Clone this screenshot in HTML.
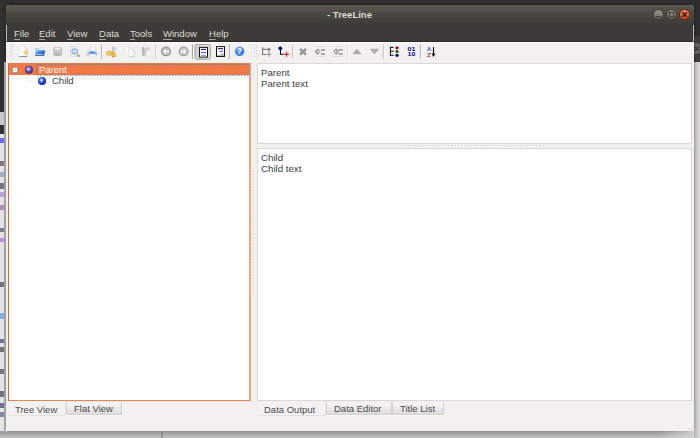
<!DOCTYPE html>
<html><head><meta charset="utf-8">
<style>
html,body{margin:0;padding:0}
body{width:700px;height:438px;position:relative;overflow:hidden;background:#d6d6d6;font-family:"Liberation Sans",sans-serif;font-size:9.5px;color:#3c3c3c}
div,span,svg{position:absolute;box-sizing:border-box}
.bgdark{background:#303030}
#win{left:6px;top:5px;width:688px;height:426px;background:#f2f1f0;border-radius:4px 4px 0 0;box-shadow:0 -1px 3px 0 rgba(0,0,0,.35)}
#title{left:0;top:0;width:688px;height:20px;border-radius:4px 4px 0 0;background:linear-gradient(#5d5a51,#4a4842 45%,#3c3b37)}
#title .t{left:0;width:688px;top:4px;text-align:center;font-weight:bold;color:#dfdbd2;font-size:9.5px;line-height:11px;padding-right:1px}
#menubar{left:0;top:20px;width:688px;height:17px;background:#3c3b37;border-left:1px solid #b9b8b4;border-right:1px solid #b9b8b4;border-bottom:1px solid #2a2926}
.mi{top:3px;color:#dfdbd2;font-size:9.5px;line-height:11px;white-space:nowrap}
.mi u{text-decoration:none;border-bottom:1px solid rgba(223,219,210,.65)}
#toolbar{left:0;top:37px;width:688px;height:21px;background:#f2f1f0;border-top:1px solid #fff}
.sep{top:2px;width:2px;height:15px;border-left:1px solid #b5b4b1;border-right:1px solid #fbfbfa}
.wb{top:4px;width:11px;height:11px;border-radius:50%}
.pane{background:#fff;border:1px solid #d9d8d5}
.tab{font-size:9.5px;line-height:11px;white-space:nowrap;color:#4a4a4a}
.tabu{top:397px;height:13px;background:linear-gradient(#f7f6f5,#dedddb);border:1px solid #d3d2cf;border-top-color:#f0efee;box-shadow:0 1px 0 #fbfbfa}
.tabs{top:396px;height:15px;background:#f3f2f1;border:1px solid #e3e2e0;border-top:none;border-left-color:#eeedec}
.tab span{white-space:nowrap}
</style></head><body>
<!-- background -->
<div class="bgdark" style="left:0;top:0;width:700px;height:62px"></div>
<div class="bgdark" style="left:0;top:0;width:8px;height:134px"></div>
<div style="left:0;top:112px;width:5px;height:13px;background:#c9c9c9"></div>
<div style="left:0;top:134px;width:6px;height:304px;background:#e4e4e4"></div>
<div style="left:0;top:138px;width:4px;height:5px;background:#1a1af0;opacity:.6"></div><div style="left:0;top:161px;width:4px;height:5px;background:#3a3030;opacity:.6"></div><div style="left:0;top:172px;width:4px;height:5px;background:#7890b8;opacity:.6"></div><div style="left:0;top:183px;width:4px;height:6px;background:#2a2a50;opacity:.6"></div><div style="left:0;top:192px;width:4px;height:5px;background:#9a7ac8;opacity:.6"></div><div style="left:0;top:205px;width:4px;height:5px;background:#8a5a9a;opacity:.6"></div><div style="left:0;top:228px;width:4px;height:4px;background:#30384a;opacity:.6"></div><div style="left:0;top:238px;width:4px;height:4px;background:#a050d0;opacity:.6"></div><div style="left:0;top:282px;width:4px;height:5px;background:#2a2a40;opacity:.6"></div><div style="left:0;top:313px;width:4px;height:6px;background:#4a90e0;opacity:.6"></div><div style="left:0;top:339px;width:4px;height:4px;background:#1a2a70;opacity:.6"></div><div style="left:0;top:347px;width:4px;height:5px;background:#2a2a3a;opacity:.6"></div><div style="left:0;top:369px;width:4px;height:5px;background:#2a2a4a;opacity:.6"></div><div style="left:0;top:391px;width:4px;height:6px;background:#1a2a50;opacity:.6"></div><div style="left:0;top:403px;width:4px;height:5px;background:#1a2a50;opacity:.6"></div><div style="left:0;top:412px;width:4px;height:5px;background:#3a4a80;opacity:.6"></div><div style="left:0;top:433px;width:4px;height:5px;background:#4a80e0;opacity:.6"></div>
<div style="left:0;top:431px;width:700px;height:7px;background:linear-gradient(#949494,#9c9c9c 15%,#c3c3c3)"></div><div style="left:161px;top:432px;width:2px;height:6px;background:#8a8a8a;opacity:.8"></div><div style="left:660px;top:431px;width:40px;height:7px;background:linear-gradient(90deg,rgba(220,220,218,0),rgba(220,220,218,.9))"></div>
<div style="left:694px;top:62px;width:6px;height:376px;background:linear-gradient(90deg,#b8b8b7,#dcdcda)"></div>
<div style="left:4px;top:62px;width:3px;height:370px;background:linear-gradient(90deg,#b6b6b6,#a6a6a6 35%,#dcdcdc)"></div>
<div style="left:694px;top:0;width:6px;height:36px;background:#2d2d2d"></div><div style="left:694px;top:36px;width:6px;height:26px;background:#3c3b37"></div><div style="left:691px;top:43px;width:11px;height:11px;border-radius:50%;background:#66655f"></div>
<svg style="left:691px;top:43px" width="11" height="11"><path d="M3.4 3.4l4.4 4.4M7.8 3.4l-4.4 4.4" stroke="#3a3935" stroke-width="1.4"/></svg>
<div id="win">
 <div id="title"><div class="t">- TreeLine</div>
  <div class="wb" style="left:647px;background:linear-gradient(#98968d,#6a6861);border:1px solid #3a3935"></div>
  <div class="wb" style="left:660px;background:linear-gradient(#98968d,#6a6861);border:1px solid #3a3935"></div>
  <div class="wb" style="left:673px;background:linear-gradient(#f68a5e,#df4a18);border:1px solid #6a2a10"></div>
 </div>
 <div id="menubar">
  <div class="mi" style="left:7px"><u>F</u>ile</div>
  <div class="mi" style="left:32px"><u>E</u>dit</div>
  <div class="mi" style="left:60px"><u>V</u>iew</div>
  <div class="mi" style="left:92px"><u>D</u>ata</div>
  <div class="mi" style="left:123px"><u>T</u>ools</div>
  <div class="mi" style="left:156px"><u>W</u>indow</div>
  <div class="mi" style="left:202px"><u>H</u>elp</div>
 </div>
 <div id="toolbar"></div>
 <!-- tree -->
 <div id="tree" style="left:2px;top:58px;width:243px;height:338px;background:#fff;border:1px solid #d9673a;border-right:2px solid #f2a480;border-bottom-color:#e9855c;border-top-color:#e57c52;box-shadow:0 1px 0 #e6e7e6">
  <div style="left:0;top:0;width:240px;height:11px;background:#f07746"></div>
  <div style="left:30px;top:0px;color:#fff;line-height:11px">Parent</div>
  <div style="left:43px;top:11px;line-height:11px">Child</div>
 </div>
 <!-- right panes -->
 <div class="pane" style="left:251px;top:58px;width:435px;height:81px"><div style="left:3px;top:3px;line-height:11px;font-size:9.7px">Parent<br>Parent text</div></div>
 <div class="pane" style="left:251px;top:143px;width:435px;height:253px"><div style="left:3px;top:3px;line-height:11px;font-size:9.7px">Child<br>Child text</div></div>
 <!-- tabs -->
 <div class="tab tabs" style="left:2px;width:58px"><span style="left:6px;top:3px">Tree View</span></div>
 <div class="tab tabu" style="left:60px;width:56px"><span style="left:7px;top:0px">Flat View</span></div>
 <div class="tab tabs" style="left:251px;width:69px"><span style="left:6px;top:3px">Data Output</span></div>
 <div class="tab tabu" style="left:320px;width:66px"><span style="left:7px;top:0px">Data Editor</span></div>
 <div class="tab tabu" style="left:386px;width:52px"><span style="left:7px;top:0px">Title List</span></div>
</div>

<svg id="ov" style="left:0;top:0" width="700" height="438" viewBox="0 0 700 438">
<defs>
<radialGradient id="gp" cx="0.44" cy="0.42" r="0.6"><stop offset="0" stop-color="#efe4f4"/><stop offset="0.18" stop-color="#c4b6e0"/><stop offset="0.5" stop-color="#6558b4"/><stop offset="1" stop-color="#2c2180"/></radialGradient>
<radialGradient id="gc" cx="0.42" cy="0.4" r="0.62"><stop offset="0" stop-color="#f4faff"/><stop offset="0.18" stop-color="#a8c8ff"/><stop offset="0.5" stop-color="#2c54e0"/><stop offset="1" stop-color="#081494"/></radialGradient>
<radialGradient id="gh" cx="0.4" cy="0.35" r="0.7"><stop offset="0" stop-color="#70a8ff"/><stop offset="1" stop-color="#2f6cf0"/></radialGradient>
<linearGradient id="gf" x1="0" y1="0" x2="1" y2="1"><stop offset="0" stop-color="#7ab8f4"/><stop offset="0.5" stop-color="#2c62dc"/><stop offset="1" stop-color="#1a44c0"/></linearGradient>
</defs>
<rect x="10.1" y="43.7" width="1.2" height="1.2" fill="#cbcac6"/><rect x="11.2" y="44.8" width="1" height="1" fill="#fbfbfa"/><rect x="12.0" y="45.7" width="1.2" height="1.2" fill="#cbcac6"/><rect x="13.1" y="46.8" width="1" height="1" fill="#fbfbfa"/><rect x="10.1" y="47.8" width="1.2" height="1.2" fill="#cbcac6"/><rect x="11.2" y="48.9" width="1" height="1" fill="#fbfbfa"/><rect x="12.0" y="49.8" width="1.2" height="1.2" fill="#cbcac6"/><rect x="13.1" y="50.9" width="1" height="1" fill="#fbfbfa"/><rect x="10.1" y="51.8" width="1.2" height="1.2" fill="#cbcac6"/><rect x="11.2" y="52.9" width="1" height="1" fill="#fbfbfa"/><rect x="12.0" y="53.8" width="1.2" height="1.2" fill="#cbcac6"/><rect x="13.1" y="54.9" width="1" height="1" fill="#fbfbfa"/><rect x="10.1" y="55.8" width="1.2" height="1.2" fill="#cbcac6"/><rect x="11.2" y="56.9" width="1" height="1" fill="#fbfbfa"/><rect x="12.0" y="57.7" width="1.2" height="1.2" fill="#cbcac6"/><rect x="13.1" y="58.8" width="1" height="1" fill="#fbfbfa"/>
<!-- new -->
<path d="M19.3 46.5h5l2.7 2.7v7.3h-7.7z" fill="#fdfdff" stroke="#dfe0ef" stroke-width=".5"/>
<path d="M23.6 46.5h.9l2.7 2.7v1.6z" fill="#cfd0f2"/>
<rect x="19" y="56" width="8.2" height="1" fill="#8a97ad"/><path d="M27 49.4v6.6" stroke="#b4bbd0" stroke-width=".6"/>
<path d="M25.5 50l.9 1.5 1.5.9-1.5.9-.9 1.5-.9-1.5-1.5-.9 1.5-.9z" fill="#f7c534" stroke="#f0ac30" stroke-width=".4"/>
<circle cx="25.5" cy="52.4" r=".8" fill="#fdf08a"/>
<!-- open -->
<path d="M35.2 48.2h3l.8 .9h3.2v6.9h-7z" fill="#8cc2f5"/><path d="M35.8 48.8h2.2l.8 .9h-3z" fill="#d8ecff"/>
<path d="M37.6 50.4l3.4-3 1.8 1.3 1.2 1.7z" fill="#fff" stroke="#9fb0de" stroke-width=".4"/>
<path d="M37.4 50.6h8l-1.6 5.5h-8.4z" fill="url(#gf)"/>
<rect x="36.6" y="54.2" width="6.4" height=".9" fill="#e8f0ff"/>
<rect x="38" y="51.8" width="4.5" height=".7" fill="#6aa0f0"/>
<!-- save disabled -->
<rect x="53.2" y="47.2" width="8.8" height="8.6" rx="1" fill="#bfbfbf"/>
<rect x="54.6" y="47.8" width="5.8" height="2.4" fill="#ececec"/>
<rect x="53.8" y="51.2" width="7.6" height="1.6" fill="#c9c9c9"/>
<rect x="55" y="53.4" width="5" height="2.4" fill="#b4b4b4"/>
<!-- print preview -->
<path d="M70.5 46.5h4.6l2.6 2.6v7.2h-7.2z" fill="#eef1fa" stroke="#c6cde4" stroke-width=".6"/>
<circle cx="74.6" cy="51.4" r="2.7" fill="#bcd6f8" stroke="#86a8e0" stroke-width="1"/>
<rect x="72.8" y="50.9" width="3.6" height="1" fill="#e6f0ff"/>
<path d="M77.6 54.6l1.5 1.5" stroke="#a8862c" stroke-width="1.5" stroke-linecap="round"/>
<path d="M77.6 54.6l1.5 1.5" stroke="#ecb836" stroke-width=".9" stroke-linecap="round"/>
<!-- printer -->
<rect x="90.4" y="46.5" width="4.8" height="5" fill="#fcfcff" stroke="#d4d8ea" stroke-width=".5"/>
<rect x="87.2" y="50.2" width="10" height="5" rx="1.2" fill="#d6dae6"/>
<rect x="87.2" y="53.6" width="10" height="1.6" rx=".6" fill="#9aa0b4"/>
<rect x="89.5" y="51.7" width="5.8" height="1.5" rx=".5" fill="#1e80f2"/>
<rect x="89" y="54.2" width="6.6" height="2.4" fill="#fbfbff" stroke="#cfd3e4" stroke-width=".4"/>
<rect x="101.0" y="44.5" width="1" height="14.4" fill="#b3b2af"/><rect x="102.0" y="44.5" width="1" height="14.4" fill="#fafaf9"/>
<!-- scissors -->
<path d="M111.7 51.9l1.3-5.6.9 .4-.6 5.4z" fill="#d4d7e8" stroke="#858bb2" stroke-width=".35"/>
<path d="M112.9 52.2l2.7-4.9.8 .7-2.3 4.7z" fill="#eeeff6" stroke="#9aa0c0" stroke-width=".35"/>
<ellipse cx="109" cy="53.3" rx="1.9" ry="1.6" fill="none" stroke="#eeaa10" stroke-width="1.4"/>
<ellipse cx="113.5" cy="54.9" rx="1.5" ry="1.9" fill="none" stroke="#e89a08" stroke-width="1.4"/>
<path d="M110.3 52.3l2.6 .7" stroke="#f2b416" stroke-width="1.5"/>
<!-- copy disabled -->
<path d="M124.4 46.5h3.4l1.8 1.8v5.5h-5.2z" fill="#f8f8fb" stroke="#dedfe8" stroke-width=".5"/><path d="M127.8 46.5l1.8 1.8v5.5" fill="none" stroke="#c8c9d6" stroke-width=".7"/>
<path d="M128.5 49h3.6l2 2v5.6h-5.6z" fill="#f6f6fa" stroke="#dcdde6" stroke-width=".5"/><path d="M132.1 49l2 2v5.6h-5.6" fill="none" stroke="#c6c7d4" stroke-width=".7"/>
<!-- paste disabled -->
<rect x="142" y="47" width="8" height="8.8" rx="1" fill="#d0d0d0"/>
<rect x="142" y="47" width="2.4" height="8.8" rx="1" fill="#bababa"/>
<ellipse cx="146" cy="47.2" rx="2" ry="1" fill="#f4f4f4" stroke="#c8c8c8" stroke-width=".4"/>
<path d="M146.2 50.2h3.8l2 2v4.6h-5.8z" fill="#f3f3f3" stroke="#d4d4d4" stroke-width=".4"/>
<rect x="155.0" y="44.5" width="1" height="14.4" fill="#d0cfcc"/><rect x="156.0" y="44.5" width="1" height="14.4" fill="#fafaf9"/>
<!-- back / fwd -->
<circle cx="166" cy="51.4" r="4.4" fill="#c2c2c2" stroke="#8c8c8c" stroke-width="1.1"/>
<path d="M162.8 51.4l3.2-3v2h3.3v2h-3.3v2z" fill="#fff" stroke="#a8a8a8" stroke-width=".35"/>
<circle cx="183.6" cy="51.4" r="4.4" fill="#cacaca" stroke="#999" stroke-width="1.1"/>
<path d="M186.8 51.4l-3.2-3v2h-3.3v2h3.3v2z" fill="#fff" stroke="#b0b0b0" stroke-width=".35"/>
<rect x="192.0" y="44.5" width="1" height="14.4" fill="#a9a8a5"/><rect x="193.0" y="44.5" width="1" height="14.4" fill="#fafaf9"/>
<!-- checked btn -->
<linearGradient id="gb" x1="0" x2="1"><stop offset="0" stop-color="#cccbc8"/><stop offset=".35" stop-color="#dddcd9"/><stop offset="1" stop-color="#e2e1de"/></linearGradient><rect x="195" y="44.5" width="15.4" height="14.8" rx="1.6" fill="url(#gb)" stroke="#a3a29e" stroke-width="1"/>
<rect x="199.5" y="47.4" width="8" height="9.7" fill="#fff" stroke="#111" stroke-width="1"/>
<rect x="201" y="48.9" width="5" height="1" fill="#000080"/>
<rect x="201" y="51.9" width="5" height="1" fill="#4a4aff"/>
<rect x="201" y="54.8" width="5" height="1" fill="#7c7cff"/>
<!-- second view btn -->
<rect x="216.5" y="46.6" width="8" height="9.6" fill="#fff" stroke="#111" stroke-width="1"/>
<rect x="216" y="56" width="9" height=".9" fill="#111"/>
<rect x="217.8" y="48.2" width="5.2" height="1" fill="#000080"/>
<rect x="219.6" y="50.9" width="3.4" height="1" fill="#4a4aff"/>
<rect x="221.4" y="53.8" width="1.8" height="1" fill="#5a5aff"/>
<rect x="228.9" y="44.5" width="1" height="14.4" fill="#a9a8a5"/><rect x="229.9" y="44.5" width="1" height="14.4" fill="#fafaf9"/>
<!-- help -->
<circle cx="239.6" cy="51.4" r="4.7" fill="url(#gh)"/>
<text x="239.6" y="54.4" font-family="Liberation Sans" font-weight="bold" font-size="8.2" fill="#fff" text-anchor="middle">?</text>
<rect x="254.0" y="43.7" width="1.2" height="1.2" fill="#cbcac6"/><rect x="255.1" y="44.8" width="1" height="1" fill="#fbfbfa"/><rect x="255.9" y="45.7" width="1.2" height="1.2" fill="#cbcac6"/><rect x="257.0" y="46.8" width="1" height="1" fill="#fbfbfa"/><rect x="254.0" y="47.8" width="1.2" height="1.2" fill="#cbcac6"/><rect x="255.1" y="48.9" width="1" height="1" fill="#fbfbfa"/><rect x="255.9" y="49.8" width="1.2" height="1.2" fill="#cbcac6"/><rect x="257.0" y="50.9" width="1" height="1" fill="#fbfbfa"/><rect x="254.0" y="51.8" width="1.2" height="1.2" fill="#cbcac6"/><rect x="255.1" y="52.9" width="1" height="1" fill="#fbfbfa"/><rect x="255.9" y="53.8" width="1.2" height="1.2" fill="#cbcac6"/><rect x="257.0" y="54.9" width="1" height="1" fill="#fbfbfa"/><rect x="254.0" y="55.8" width="1.2" height="1.2" fill="#cbcac6"/><rect x="255.1" y="56.9" width="1" height="1" fill="#fbfbfa"/><rect x="255.9" y="57.7" width="1.2" height="1.2" fill="#cbcac6"/><rect x="257.0" y="58.8" width="1" height="1" fill="#fbfbfa"/>
<!-- insert sibling -->
<path d="M262.6 47.1v7.8M262.1 49.3h5M262.1 54.4h4.6" stroke="#6e6e6e" stroke-width="1" fill="none"/>
<circle cx="269" cy="49.4" r="1.6" fill="#858585"/>
<path d="M266.9 54.3h4.2M269 51.7v5" stroke="#8a8a8a" stroke-width=".9"/>
<!-- add child -->
<circle cx="280.3" cy="48.3" r="1.9" fill="#00008c"/>
<path d="M280.5 50v4.3h3.2" stroke="#000" stroke-width="1.1" fill="none"/>
<path d="M284 54.3h5M286.5 51.8v5" stroke="#ff2222" stroke-width="1.2"/>
<rect x="292.0" y="44.5" width="1" height="14.4" fill="#c6c5c2"/><rect x="293.0" y="44.5" width="1" height="14.4" fill="#fafaf9"/>
<!-- delete -->
<path d="M300 48.8l6 5.8M306 48.8l-6 5.8" stroke="#939393" stroke-width="2.4"/>
<!-- indent -->
<rect x="315.3" y="46" width="9.8" height=".6" fill="#cfcfcf"/><rect x="315.3" y="56" width="9.8" height=".6" fill="#cfcfcf"/>
<path d="M315.7 50.4h1.9v-1.6l2.7 2.8-2.7 2.8v-1.6h-1.9z" fill="#dadada" stroke="#727272" stroke-width=".8"/>
<rect x="321" y="49" width="4.1" height="1.8" fill="#a4a4a4"/><rect x="321" y="53.2" width="4.1" height="1.8" fill="#a4a4a4"/>
<!-- unindent -->
<rect x="333" y="46" width="9.8" height=".6" fill="#cfcfcf"/><rect x="333" y="56" width="9.8" height=".6" fill="#cfcfcf"/>
<path d="M338 50.4h-1.7v-1.6l-2.9 2.8 2.9 2.8v-1.6h1.7z" fill="#dadada" stroke="#727272" stroke-width=".8"/>
<rect x="338.4" y="49" width="4.4" height="1.8" fill="#a4a4a4"/><rect x="338.4" y="53.2" width="4.4" height="1.8" fill="#a4a4a4"/>
<rect x="347.1" y="44.5" width="1" height="14.4" fill="#dfdfe2"/><rect x="348.1" y="44.5" width="1" height="14.4" fill="#fafaf9"/>
<!-- up/down -->
<path d="M356.9 49.3l3.9 4.5h-7.8z" fill="#acacac" stroke="#8a8a8a" stroke-width=".5"/>
<path d="M370.5 49.2h8l-4 4.5z" fill="#acacac" stroke="#8a8a8a" stroke-width=".5"/>
<rect x="382.9" y="44.5" width="1" height="14.4" fill="#c4c3c0"/><rect x="383.9" y="44.5" width="1" height="14.4" fill="#fafaf9"/>
<!-- tree dots -->
<path d="M390.4 46.6v9.2M390 47.4h3.7M390 51.2h3.7M390 55.3h3.7" stroke="#111" stroke-width="1" fill="none"/>
<circle cx="397" cy="47.8" r="1.6" fill="#a0001c"/><circle cx="397" cy="51.5" r="1.6" fill="#00600c"/><circle cx="397" cy="55.3" r="1.6" fill="#00008c"/>
<!-- 01 10 -->
<text x="407.5" y="51" font-family="Liberation Sans" font-weight="bold" font-size="5.4" fill="#00008c" textLength="7.8" lengthAdjust="spacingAndGlyphs">01</text>
<text x="407.5" y="55.9" font-family="Liberation Sans" font-weight="bold" font-size="5.4" fill="#00008c" textLength="7.8" lengthAdjust="spacingAndGlyphs">10</text>
<rect x="419.9" y="44.5" width="1" height="14.4" fill="#a9a8a5"/><rect x="420.9" y="44.5" width="1" height="14.4" fill="#fafaf9"/>
<!-- AZ -->
<text x="427" y="51.1" font-family="Liberation Sans" font-weight="bold" font-size="5.6" fill="#3444c4">A</text>
<text x="427.2" y="56.6" font-family="Liberation Sans" font-weight="bold" font-size="5.8" fill="#a02222">Z</text>
<path d="M433.5 47.1v7" stroke="#000" stroke-width="1.1"/><path d="M431.5 53.4h4l-2 3.5z" fill="#000"/>


<!-- window button glyphs -->
<path d="M656 16.8h5.4" stroke="#3c3b37" stroke-width="1.3"/>
<rect x="669.3" y="12.3" width="4.6" height="4.6" fill="none" stroke="#3c3b37" stroke-width="1.2"/>
<path d="M682.2 12.2l4.8 4.8M687 12.2l-4.8 4.8" stroke="#3a1c0c" stroke-width="1.5"/>
<!-- splitter handles -->
<rect x="401.6" y="145" width="1" height="1" fill="#cac9c6"/><rect x="402.6" y="146" width="1" height="1" fill="#fcfcfb"/><rect x="404.7" y="145" width="1" height="1" fill="#cac9c6"/><rect x="405.7" y="146" width="1" height="1" fill="#fcfcfb"/><rect x="407.9" y="145" width="1" height="1" fill="#cac9c6"/><rect x="408.9" y="146" width="1" height="1" fill="#fcfcfb"/><rect x="411.0" y="145" width="1" height="1" fill="#cac9c6"/><rect x="412.0" y="146" width="1" height="1" fill="#fcfcfb"/><rect x="414.2" y="145" width="1" height="1" fill="#cac9c6"/><rect x="415.2" y="146" width="1" height="1" fill="#fcfcfb"/><rect x="417.3" y="145" width="1" height="1" fill="#cac9c6"/><rect x="418.3" y="146" width="1" height="1" fill="#fcfcfb"/><rect x="420.4" y="145" width="1" height="1" fill="#cac9c6"/><rect x="421.4" y="146" width="1" height="1" fill="#fcfcfb"/><rect x="423.6" y="145" width="1" height="1" fill="#cac9c6"/><rect x="424.6" y="146" width="1" height="1" fill="#fcfcfb"/><rect x="426.7" y="145" width="1" height="1" fill="#cac9c6"/><rect x="427.7" y="146" width="1" height="1" fill="#fcfcfb"/><rect x="429.9" y="145" width="1" height="1" fill="#cac9c6"/><rect x="430.9" y="146" width="1" height="1" fill="#fcfcfb"/><rect x="433.0" y="145" width="1" height="1" fill="#cac9c6"/><rect x="434.0" y="146" width="1" height="1" fill="#fcfcfb"/><rect x="436.1" y="145" width="1" height="1" fill="#cac9c6"/><rect x="437.1" y="146" width="1" height="1" fill="#fcfcfb"/><rect x="439.3" y="145" width="1" height="1" fill="#cac9c6"/><rect x="440.3" y="146" width="1" height="1" fill="#fcfcfb"/><rect x="442.4" y="145" width="1" height="1" fill="#cac9c6"/><rect x="443.4" y="146" width="1" height="1" fill="#fcfcfb"/><rect x="445.6" y="145" width="1" height="1" fill="#cac9c6"/><rect x="446.6" y="146" width="1" height="1" fill="#fcfcfb"/><rect x="448.7" y="145" width="1" height="1" fill="#cac9c6"/><rect x="449.7" y="146" width="1" height="1" fill="#fcfcfb"/><rect x="451.8" y="145" width="1" height="1" fill="#cac9c6"/><rect x="452.8" y="146" width="1" height="1" fill="#fcfcfb"/><rect x="455.0" y="145" width="1" height="1" fill="#cac9c6"/><rect x="456.0" y="146" width="1" height="1" fill="#fcfcfb"/><rect x="458.1" y="145" width="1" height="1" fill="#cac9c6"/><rect x="459.1" y="146" width="1" height="1" fill="#fcfcfb"/><rect x="461.3" y="145" width="1" height="1" fill="#cac9c6"/><rect x="462.3" y="146" width="1" height="1" fill="#fcfcfb"/><rect x="464.4" y="145" width="1" height="1" fill="#cac9c6"/><rect x="465.4" y="146" width="1" height="1" fill="#fcfcfb"/><rect x="467.5" y="145" width="1" height="1" fill="#cac9c6"/><rect x="468.5" y="146" width="1" height="1" fill="#fcfcfb"/><rect x="470.7" y="145" width="1" height="1" fill="#cac9c6"/><rect x="471.7" y="146" width="1" height="1" fill="#fcfcfb"/><rect x="473.8" y="145" width="1" height="1" fill="#cac9c6"/><rect x="474.8" y="146" width="1" height="1" fill="#fcfcfb"/><rect x="477.0" y="145" width="1" height="1" fill="#cac9c6"/><rect x="478.0" y="146" width="1" height="1" fill="#fcfcfb"/><rect x="480.1" y="145" width="1" height="1" fill="#cac9c6"/><rect x="481.1" y="146" width="1" height="1" fill="#fcfcfb"/><rect x="483.2" y="145" width="1" height="1" fill="#cac9c6"/><rect x="484.2" y="146" width="1" height="1" fill="#fcfcfb"/><rect x="486.4" y="145" width="1" height="1" fill="#cac9c6"/><rect x="487.4" y="146" width="1" height="1" fill="#fcfcfb"/><rect x="489.5" y="145" width="1" height="1" fill="#cac9c6"/><rect x="490.5" y="146" width="1" height="1" fill="#fcfcfb"/><rect x="492.7" y="145" width="1" height="1" fill="#cac9c6"/><rect x="493.7" y="146" width="1" height="1" fill="#fcfcfb"/><rect x="495.8" y="145" width="1" height="1" fill="#cac9c6"/><rect x="496.8" y="146" width="1" height="1" fill="#fcfcfb"/><rect x="498.9" y="145" width="1" height="1" fill="#cac9c6"/><rect x="499.9" y="146" width="1" height="1" fill="#fcfcfb"/><rect x="502.1" y="145" width="1" height="1" fill="#cac9c6"/><rect x="503.1" y="146" width="1" height="1" fill="#fcfcfb"/><rect x="505.2" y="145" width="1" height="1" fill="#cac9c6"/><rect x="506.2" y="146" width="1" height="1" fill="#fcfcfb"/><rect x="508.4" y="145" width="1" height="1" fill="#cac9c6"/><rect x="509.4" y="146" width="1" height="1" fill="#fcfcfb"/><rect x="511.5" y="145" width="1" height="1" fill="#cac9c6"/><rect x="512.5" y="146" width="1" height="1" fill="#fcfcfb"/><rect x="514.6" y="145" width="1" height="1" fill="#cac9c6"/><rect x="515.6" y="146" width="1" height="1" fill="#fcfcfb"/><rect x="517.8" y="145" width="1" height="1" fill="#cac9c6"/><rect x="518.8" y="146" width="1" height="1" fill="#fcfcfb"/><rect x="520.9" y="145" width="1" height="1" fill="#cac9c6"/><rect x="521.9" y="146" width="1" height="1" fill="#fcfcfb"/><rect x="524.1" y="145" width="1" height="1" fill="#cac9c6"/><rect x="525.1" y="146" width="1" height="1" fill="#fcfcfb"/><rect x="527.2" y="145" width="1" height="1" fill="#cac9c6"/><rect x="528.2" y="146" width="1" height="1" fill="#fcfcfb"/><rect x="530.3" y="145" width="1" height="1" fill="#cac9c6"/><rect x="531.3" y="146" width="1" height="1" fill="#fcfcfb"/><rect x="533.5" y="145" width="1" height="1" fill="#cac9c6"/><rect x="534.5" y="146" width="1" height="1" fill="#fcfcfb"/><rect x="536.6" y="145" width="1" height="1" fill="#cac9c6"/><rect x="537.6" y="146" width="1" height="1" fill="#fcfcfb"/><rect x="539.8" y="145" width="1" height="1" fill="#cac9c6"/><rect x="540.8" y="146" width="1" height="1" fill="#fcfcfb"/><rect x="542.9" y="145" width="1" height="1" fill="#cac9c6"/><rect x="543.9" y="146" width="1" height="1" fill="#fcfcfb"/><rect x="253" y="168.0" width="1" height="1" fill="#cac9c6"/><rect x="254" y="169.0" width="1" height="1" fill="#fcfcfb"/><rect x="253" y="171.1" width="1" height="1" fill="#cac9c6"/><rect x="254" y="172.1" width="1" height="1" fill="#fcfcfb"/><rect x="253" y="174.3" width="1" height="1" fill="#cac9c6"/><rect x="254" y="175.3" width="1" height="1" fill="#fcfcfb"/><rect x="253" y="177.4" width="1" height="1" fill="#cac9c6"/><rect x="254" y="178.4" width="1" height="1" fill="#fcfcfb"/><rect x="253" y="180.6" width="1" height="1" fill="#cac9c6"/><rect x="254" y="181.6" width="1" height="1" fill="#fcfcfb"/><rect x="253" y="183.7" width="1" height="1" fill="#cac9c6"/><rect x="254" y="184.7" width="1" height="1" fill="#fcfcfb"/><rect x="253" y="186.8" width="1" height="1" fill="#cac9c6"/><rect x="254" y="187.8" width="1" height="1" fill="#fcfcfb"/><rect x="253" y="190.0" width="1" height="1" fill="#cac9c6"/><rect x="254" y="191.0" width="1" height="1" fill="#fcfcfb"/><rect x="253" y="193.1" width="1" height="1" fill="#cac9c6"/><rect x="254" y="194.1" width="1" height="1" fill="#fcfcfb"/><rect x="253" y="196.3" width="1" height="1" fill="#cac9c6"/><rect x="254" y="197.3" width="1" height="1" fill="#fcfcfb"/><rect x="253" y="199.4" width="1" height="1" fill="#cac9c6"/><rect x="254" y="200.4" width="1" height="1" fill="#fcfcfb"/><rect x="253" y="202.5" width="1" height="1" fill="#cac9c6"/><rect x="254" y="203.5" width="1" height="1" fill="#fcfcfb"/><rect x="253" y="205.7" width="1" height="1" fill="#cac9c6"/><rect x="254" y="206.7" width="1" height="1" fill="#fcfcfb"/><rect x="253" y="208.8" width="1" height="1" fill="#cac9c6"/><rect x="254" y="209.8" width="1" height="1" fill="#fcfcfb"/><rect x="253" y="212.0" width="1" height="1" fill="#cac9c6"/><rect x="254" y="213.0" width="1" height="1" fill="#fcfcfb"/><rect x="253" y="215.1" width="1" height="1" fill="#cac9c6"/><rect x="254" y="216.1" width="1" height="1" fill="#fcfcfb"/><rect x="253" y="218.2" width="1" height="1" fill="#cac9c6"/><rect x="254" y="219.2" width="1" height="1" fill="#fcfcfb"/><rect x="253" y="221.4" width="1" height="1" fill="#cac9c6"/><rect x="254" y="222.4" width="1" height="1" fill="#fcfcfb"/><rect x="253" y="224.5" width="1" height="1" fill="#cac9c6"/><rect x="254" y="225.5" width="1" height="1" fill="#fcfcfb"/><rect x="253" y="227.7" width="1" height="1" fill="#cac9c6"/><rect x="254" y="228.7" width="1" height="1" fill="#fcfcfb"/><rect x="253" y="230.8" width="1" height="1" fill="#cac9c6"/><rect x="254" y="231.8" width="1" height="1" fill="#fcfcfb"/><rect x="253" y="233.9" width="1" height="1" fill="#cac9c6"/><rect x="254" y="234.9" width="1" height="1" fill="#fcfcfb"/><rect x="253" y="237.1" width="1" height="1" fill="#cac9c6"/><rect x="254" y="238.1" width="1" height="1" fill="#fcfcfb"/><rect x="253" y="240.2" width="1" height="1" fill="#cac9c6"/><rect x="254" y="241.2" width="1" height="1" fill="#fcfcfb"/><rect x="253" y="243.4" width="1" height="1" fill="#cac9c6"/><rect x="254" y="244.4" width="1" height="1" fill="#fcfcfb"/><rect x="253" y="246.5" width="1" height="1" fill="#cac9c6"/><rect x="254" y="247.5" width="1" height="1" fill="#fcfcfb"/><rect x="253" y="249.6" width="1" height="1" fill="#cac9c6"/><rect x="254" y="250.6" width="1" height="1" fill="#fcfcfb"/><rect x="253" y="252.8" width="1" height="1" fill="#cac9c6"/><rect x="254" y="253.8" width="1" height="1" fill="#fcfcfb"/><rect x="253" y="255.9" width="1" height="1" fill="#cac9c6"/><rect x="254" y="256.9" width="1" height="1" fill="#fcfcfb"/><rect x="253" y="259.1" width="1" height="1" fill="#cac9c6"/><rect x="254" y="260.1" width="1" height="1" fill="#fcfcfb"/><rect x="253" y="262.2" width="1" height="1" fill="#cac9c6"/><rect x="254" y="263.2" width="1" height="1" fill="#fcfcfb"/><rect x="253" y="265.3" width="1" height="1" fill="#cac9c6"/><rect x="254" y="266.3" width="1" height="1" fill="#fcfcfb"/><rect x="253" y="268.5" width="1" height="1" fill="#cac9c6"/><rect x="254" y="269.5" width="1" height="1" fill="#fcfcfb"/><rect x="253" y="271.6" width="1" height="1" fill="#cac9c6"/><rect x="254" y="272.6" width="1" height="1" fill="#fcfcfb"/><rect x="253" y="274.8" width="1" height="1" fill="#cac9c6"/><rect x="254" y="275.8" width="1" height="1" fill="#fcfcfb"/><rect x="253" y="277.9" width="1" height="1" fill="#cac9c6"/><rect x="254" y="278.9" width="1" height="1" fill="#fcfcfb"/><rect x="253" y="281.0" width="1" height="1" fill="#cac9c6"/><rect x="254" y="282.0" width="1" height="1" fill="#fcfcfb"/><rect x="253" y="284.2" width="1" height="1" fill="#cac9c6"/><rect x="254" y="285.2" width="1" height="1" fill="#fcfcfb"/><rect x="253" y="287.3" width="1" height="1" fill="#cac9c6"/><rect x="254" y="288.3" width="1" height="1" fill="#fcfcfb"/><rect x="253" y="290.5" width="1" height="1" fill="#cac9c6"/><rect x="254" y="291.5" width="1" height="1" fill="#fcfcfb"/><rect x="253" y="293.6" width="1" height="1" fill="#cac9c6"/><rect x="254" y="294.6" width="1" height="1" fill="#fcfcfb"/>
<g stroke-width=".8"><path d="M686.5 431.5l7-7M689 431.5l4.5-4.5M691.5 431.5l2-2" stroke="#bdbcb9" stroke-dasharray="1 1"/><path d="M687.5 431.5l6-6M690 431.5l3.5-3.5M692.5 431.5l1-1" stroke="#fdfdfc" stroke-dasharray="1 1"/></g>
<!-- tree icons -->
<rect x="12.5" y="67.5" width="5" height="5" fill="#fff" stroke="#9c9c9c" stroke-width=".9"/>
<rect x="13.8" y="69.6" width="2.4" height=".8" fill="#a8a8a8"/>
<rect x="19.5" y="69.7" width="2.2" height=".6" fill="#f6b093"/>
<circle cx="28.9" cy="69.7" r="4" fill="url(#gp)"/>
<circle cx="42" cy="80.9" r="4" fill="url(#gc)"/>
<path d="M28.5 76.5v4.5h5" stroke="#d0d0d0" stroke-width=".8" stroke-dasharray="1 1" fill="none"/>
<rect x="36.5" y="64.5" width="213" height="11" fill="none" stroke="#2b8db6" stroke-width=".7" stroke-dasharray="1.6 1.4"/>
</svg>
</body></html>
